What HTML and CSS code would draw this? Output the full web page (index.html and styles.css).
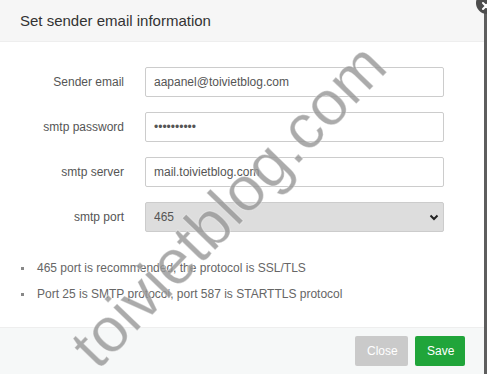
FILE: index.html
```
<!DOCTYPE html>
<html lang="en">
<head>
    <meta charset="UTF-8">
    <meta name="viewport" content="width=device-width, initial-scale=1.0">
    <title>Set sender email information</title>
    <link rel="stylesheet" href="styles.css">
</head>
<body>
    <div class="dialog">
        <div class="dialog-title">Set sender email information</div>
        <span class="close-x">
            <svg width="10" height="10" viewBox="0 0 10 10"><path d="M2 2L8 8M8 2L2 8" stroke="#fff" stroke-width="2" stroke-linecap="round"/></svg>
        </span>
        <div class="dialog-body">
            <div class="form-row">
                <label class="form-label">Sender email</label>
                <input class="form-input" type="text" value="aapanel@toivietblog.com">
            </div>
            <div class="form-row">
                <label class="form-label">smtp password</label>
                <input class="form-input" type="password" value="1234567890">
            </div>
            <div class="form-row">
                <label class="form-label">smtp server</label>
                <input class="form-input" type="text" value="mail.toivietblog.com">
            </div>
            <div class="form-row">
                <label class="form-label">smtp port</label>
                <div class="select-wrap">
                    <select class="form-select">
                        <option>465</option>
                        <option>25</option>
                        <option>587</option>
                    </select>
                    <svg class="chevron" width="10" height="7" viewBox="0 0 10 7"><path d="M1.5 1.5L5 5L8.5 1.5" fill="none" stroke="#222" stroke-width="2"/></svg>
                </div>
            </div>
            <ul class="tips">
                <li>465 port is recommended, the protocol is SSL/TLS</li>
                <li>Port 25 is SMTP protocol, port 587 is STARTTLS protocol</li>
            </ul>
        </div>
        <div class="dialog-footer">
            <button class="btn btn-close">Close</button>
            <button class="btn btn-save">Save</button>
        </div>
        <div class="watermark">toivietblog.com</div>
    </div>
</body>
</html>
```

FILE: styles.css
```
body {
    margin: 0;
    background-color: #5e5e5e;
    font-family: "Liberation Sans", Arial, sans-serif;
    overflow: hidden;
}
.dialog {
    position: relative;
    width: 484px;
    height: 374px;
    background: #fff;
}
.dialog-title {
    height: 41px;
    line-height: 41px;
    padding-left: 20px;
    font-size: 15px;
    color: #333;
    background: #f6f6f6;
    border-bottom: 1px solid #eee;
}
.close-x {
    position: absolute;
    top: -8px;
    right: -14px;
    width: 22px;
    height: 22px;
    border-radius: 50%;
    background: #4d4d4d;
    display: flex;
    align-items: center;
    justify-content: center;
    padding-top: 5px;
    padding-right: 3px;
    box-sizing: border-box;
}
.dialog-body {
    padding: 25px 40px 20px 0;
}
.form-row {
    display: flex;
    align-items: center;
    margin-bottom: 15px;
}
.form-label {
    width: 124px;
    margin-right: 21px;
    text-align: right;
    font-size: 12px;
    color: #555;
}
.form-input, .form-select {
    width: 299px;
    height: 30px;
    box-sizing: border-box;
    padding: 0 8px;
    border: 1px solid #ccc;
    border-radius: 2px;
    font-family: "Liberation Sans", Arial, sans-serif;
    font-size: 12px;
    color: #555;
    background: #fff;
    outline: none;
}
.select-wrap {
    position: relative;
}
.form-select {
    appearance: none;
    background: #dddddd;
    color: #555;
}
.chevron {
    position: absolute;
    right: 5px;
    top: 12px;
}
.tips {
    margin: 23px 0 0 0;
    padding-left: 21px;
    list-style: none;
    font-size: 12px;
    line-height: 26px;
    color: #666;
}
.tips li {
    display: flex;
    align-items: center;
}
.tips li::before {
    content: "";
    width: 3px;
    height: 3px;
    margin-right: 13px;
    background: #888;
}
.dialog-footer {
    display: flex;
    justify-content: flex-end;
    gap: 7px;
    padding: 8px 19px 10px 0;
    background: #f6f8f8;
    border-top: 1px solid #eee;
}
.btn {
    height: 30px;
    padding: 0 12px;
    border: none;
    border-radius: 2px;
    font-family: "Liberation Sans", Arial, sans-serif;
    font-size: 12px;
    color: #fff;
    cursor: pointer;
}
.btn-close {
    width: 53px;
    background: #cacaca;
}
.btn-save {
    width: 50px;
    background: #20a53a;
}
.watermark {
    position: absolute;
    left: 228px;
    top: 205px;
    transform: translate(-50%, -50%) rotate(-46deg);
    font-size: 63px;
    color: rgba(150, 150, 150, 0.8);
    white-space: nowrap;
    pointer-events: none;
    -webkit-text-stroke: 1px rgba(255, 255, 255, 0.4);
}
```
